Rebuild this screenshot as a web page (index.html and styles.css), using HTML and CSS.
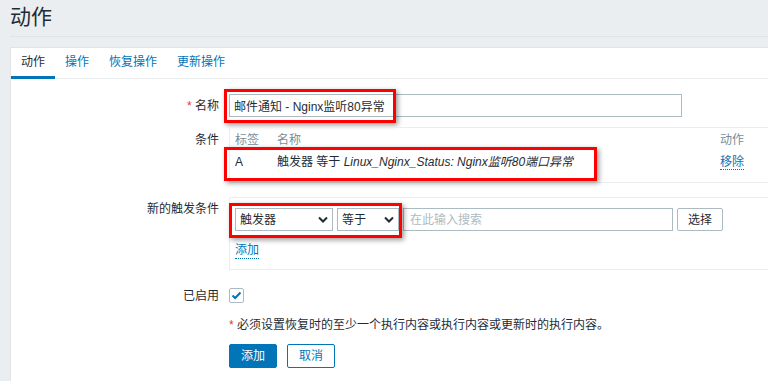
FILE: index.html
```html
<!DOCTYPE html>
<html>
<head>
    <meta charset="utf-8">
    <title>动作</title>
    <link rel="stylesheet" href="styles.css">
</head>
<body>
    <div class="page-header">
        <h1>动作</h1>
    </div>

    <div class="panel">
        <ul class="tabs">
            <li class="tab active">动作</li>
            <li class="tab"><a href="#">操作</a></li>
            <li class="tab"><a href="#">恢复操作</a></li>
            <li class="tab"><a href="#">更新操作</a></li>
        </ul>

        <div class="form">
            <!-- 名称 -->
            <div class="row row-name">
                <label class="label"><span class="req">*</span> 名称</label>
                <div class="field">
                    <input type="text" class="text-input name-input" value="邮件通知 - Nginx监听80异常">
                    <span class="mark mark-name"></span>
                </div>
            </div>

            <!-- 条件 -->
            <div class="row row-cond">
                <label class="label label-cond">条件</label>
                <div class="field">
                    <div class="box cond-box">
                        <div class="cond-row cond-head">
                            <span>标签</span>
                            <span>名称</span>
                            <span>动作</span>
                        </div>
                        <div class="cond-row cond-data">
                            <span>A</span>
                            <span>触发器 等于 <em>Linux_Nginx_Status: Nginx监听80端口异常</em></span>
                            <span><a href="#" class="link-action">移除</a></span>
                        </div>
                    </div>
                    <span class="mark mark-cond"></span>
                </div>
            </div>

            <!-- 新的触发条件 -->
            <div class="row row-new">
                <label class="label label-new">新的触发条件</label>
                <div class="field">
                    <div class="box new-box">
                        <div class="new-controls">
                            <div class="select select-type">
                                <span>触发器</span>
                                <svg width="10" height="7" viewBox="0 0 10 7"><polyline points="1,1.5 5,5.5 9,1.5" fill="none" stroke="#1f2c33" stroke-width="2"/></svg>
                            </div>
                            <div class="select select-op">
                                <span>等于</span>
                                <svg width="10" height="7" viewBox="0 0 10 7"><polyline points="1,1.5 5,5.5 9,1.5" fill="none" stroke="#1f2c33" stroke-width="2"/></svg>
                            </div>
                            <input type="text" class="text-input search-input" placeholder="在此输入搜索">
                            <button class="btn-alt">选择</button>
                        </div>
                        <a href="#" class="link-action add-link">添加</a>
                    </div>
                    <span class="mark mark-new"></span>
                </div>
            </div>

            <!-- 已启用 -->
            <div class="row row-enabled">
                <label class="label">已启用</label>
                <div class="field">
                    <span class="checkbox">
                        <svg width="11" height="9" viewBox="0 0 11 9"><polyline points="1.5,4.5 4.2,7 9.5,1.5" fill="none" stroke="#0275b8" stroke-width="2"/></svg>
                    </span>
                </div>
            </div>

            <div class="row row-note">
                <span></span>
                <div class="field note"><span class="req">*</span> 必须设置恢复时的至少一个执行内容或执行内容或更新时的执行内容。</div>
            </div>

            <div class="row row-buttons">
                <span></span>
                <div class="field buttons">
                    <button class="btn-primary">添加</button>
                    <button class="btn-outline">取消</button>
                </div>
            </div>
        </div>
    </div>
</body>
</html>
```

FILE: styles.css
```css
body {
    margin: 0;
    height: 100vh;
    overflow: hidden;
    background-color: #ebeef0;
    color: #1f2c33;
    font-family: "Liberation Sans", "Noto Sans CJK SC", sans-serif;
    font-size: 12px;
    line-height: 14px;
}
a {
    color: #0275b8;
    text-decoration: none;
}
.page-header {
    margin-left: 10px;
    height: 36px;
    border-bottom: 1px solid #dfe4e7;
}
.page-header h1 {
    margin: 0;
    font-size: 21px;
    font-weight: normal;
    line-height: 34px;
}
.panel {
    margin: 10px -30px 0 10px;
    height: calc(100vh - 47px);
    box-sizing: border-box;
    background-color: #fff;
    border-top: 1px solid #dfe4e7;
    border-left: 1px solid #dfe4e7;
}
.tabs {
    display: flex;
    margin: 0;
    padding: 0;
    list-style: none;
    height: 30px;
    border-bottom: 1px solid #ebeef0;
}
.tab {
    height: 28px;
    line-height: 28px;
    padding: 0 10px;
    border-bottom: 3px solid transparent;
    margin-bottom: -1px;
}
.tab.active {
    border-bottom-color: #0275b8;
}
.form {
    padding-top: 15px;
}
.row {
    display: grid;
    grid-template-columns: 208px 1fr;
    column-gap: 10px;
    align-items: center;
}
.label {
    text-align: right;
}
.field {
    position: relative;
}
.req {
    color: #e33734;
}
.text-input {
    box-sizing: border-box;
    height: 23px;
    border: 1px solid #acbbc2;
    padding: 0 4px;
    font: inherit;
    color: #1f2c33;
    outline: none;
}
.text-input::placeholder {
    color: #acbbc2;
}
.name-input {
    width: 453px;
}
.row-cond {
    margin-top: 10px;
    align-items: start;
}
.label-cond {
    padding-top: 6px;
}
.box {
    border: 1px solid #ebeef0;
    box-sizing: border-box;
}
.cond-box {
    padding: 0 5px 9px;
}
.cond-row {
    display: grid;
    grid-template-columns: 42px 443px auto;
}
.cond-head {
    height: 23px;
    padding-top: 5px;
    box-sizing: border-box;
    color: #768d99;
}
.cond-data {
    height: 22px;
    padding-top: 4px;
    box-sizing: border-box;
}
.link-action {
    border-bottom: 1px dotted #0275b8;
}
.row-new {
    margin-top: 14px;
    align-items: start;
}
.label-new {
    padding-top: 5px;
}
.new-box {
    padding: 10px 5px 10px;
}
.new-controls {
    display: flex;
    gap: 4px;
    height: 23px;
}
.select {
    box-sizing: border-box;
    height: 23px;
    border: 1px solid #acbbc2;
    display: flex;
    align-items: center;
    justify-content: space-between;
    padding: 0 4px 0 4px;
}
.select-type {
    width: 98px;
}
.select-op {
    width: 62px;
}
.search-input {
    width: 270px;
    padding-left: 6px;
}
.btn-alt {
    box-sizing: border-box;
    width: 46px;
    height: 23px;
    background: #fff;
    border: 1px solid #acbbc2;
    border-radius: 2px;
    font: inherit;
    color: #1f2c33;
    padding: 0;
}
.add-link {
    display: inline-block;
    margin-top: 12px;
    line-height: 15px;
}
.row-enabled {
    margin-top: 18px;
    height: 15px;
}
.checkbox {
    display: flex;
    align-items: center;
    justify-content: center;
    box-sizing: border-box;
    width: 15px;
    height: 15px;
    border: 1px solid #acbbc2;
    border-radius: 2px;
}
.row-note {
    margin-top: 15px;
}
.row-buttons {
    margin-top: 12px;
}
.buttons {
    display: flex;
    gap: 10px;
}
.btn-primary,
.btn-outline {
    box-sizing: border-box;
    width: 48px;
    height: 24px;
    border-radius: 2px;
    font: inherit;
    padding: 0;
}
.btn-primary {
    background-color: #0275b8;
    border: 1px solid #0275b8;
    color: #fff;
}
.btn-outline {
    background-color: #fff;
    border: 1px solid #0275b8;
    color: #0275b8;
}
.mark {
    position: absolute;
    box-sizing: border-box;
    border: 3px solid #ff0000;
    box-shadow: 2px 2px 5px rgba(0, 0, 0, 0.4);
    pointer-events: none;
}
.mark-name {
    left: -5px;
    top: -5px;
    width: 172px;
    height: 34px;
}
.mark-cond {
    left: -5px;
    top: 20px;
    width: 373px;
    height: 34px;
}
.mark-new {
    left: 0;
    top: 6px;
    width: 173px;
    height: 35px;
}
```
